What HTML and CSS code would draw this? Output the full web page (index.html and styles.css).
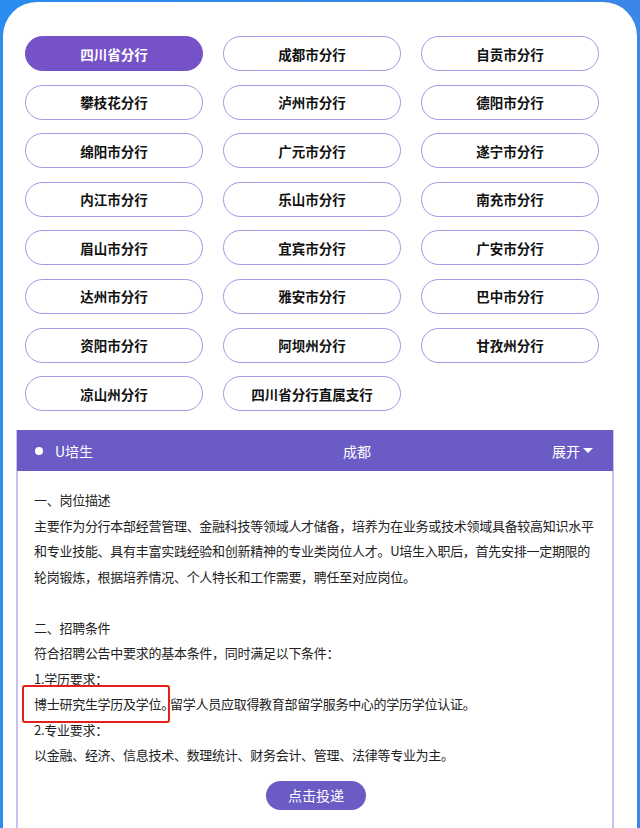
FILE: index.html
```html
<!DOCTYPE html>
<html>
<head>
    <meta charset="utf-8">
    <title>四川省分行</title>
    <link rel="stylesheet" href="styles.css">
</head>
<body>
<div class="card">
    <!-- Branch buttons -->
    <div class="branches">
        <div class="branch active">四川省分行</div>
        <div class="branch">成都市分行</div>
        <div class="branch">自贡市分行</div>
        <div class="branch">攀枝花分行</div>
        <div class="branch">泸州市分行</div>
        <div class="branch">德阳市分行</div>
        <div class="branch">绵阳市分行</div>
        <div class="branch">广元市分行</div>
        <div class="branch">遂宁市分行</div>
        <div class="branch">内江市分行</div>
        <div class="branch">乐山市分行</div>
        <div class="branch">南充市分行</div>
        <div class="branch">眉山市分行</div>
        <div class="branch">宜宾市分行</div>
        <div class="branch">广安市分行</div>
        <div class="branch">达州市分行</div>
        <div class="branch">雅安市分行</div>
        <div class="branch">巴中市分行</div>
        <div class="branch">资阳市分行</div>
        <div class="branch">阿坝州分行</div>
        <div class="branch">甘孜州分行</div>
        <div class="branch">凉山州分行</div>
        <div class="branch">四川省分行直属支行</div>
    </div>

    <!-- Job panel -->
    <div class="panel">
        <div class="panel-head">
            <span class="job"><span class="dot"></span>U培生</span>
            <span class="city">成都</span>
            <span class="toggle">展开<span class="caret"></span></span>
        </div>
        <div class="panel-body">
            <p>一、岗位描述</p>
            <p>主要作为分行本部经营管理、金融科技等领域人才储备，培养为在业务或技术领域具备较高知识水平和专业技能、具有丰富实践经验和创新精神的专业类岗位人才。U培生入职后，首先安排一定期限的轮岗锻炼，根据培养情况、个人特长和工作需要，聘任至对应岗位。</p>
            <p class="gap">二、招聘条件</p>
            <p>符合招聘公告中要求的基本条件，同时满足以下条件：</p>
            <p>1.学历要求：</p>
            <p><span class="mark">博士研究生学历及学位<span class="half">。</span></span> 留学人员应取得教育部留学服务中心的学历学位认证。</p>
            <p>2.专业要求：</p>
            <p>以金融、经济、信息技术、数理统计、财务会计、管理、法律等专业为主。</p>
            <div class="apply-row">
                <button class="apply">点击投递</button>
            </div>
        </div>
    </div>
</div>
</body>
</html>
```

FILE: styles.css
```css
body {
    margin: 0;
    background: linear-gradient(90deg, #2a8cef, #3b86e6);
    font-family: "Microsoft YaHei", "Noto Sans CJK SC", sans-serif;
    height: 828px;
    overflow: hidden;
}

.card {
    background: #fff;
    margin: 2px 3px 0;
    border-radius: 34px 34px 0 0;
    padding: 34px 0 0 0;
    min-height: 826px;
    box-sizing: border-box;
}

.branches {
    display: grid;
    grid-template-columns: repeat(3, 178px);
    column-gap: 20px;
    row-gap: 13.6px;
    padding-left: 22px;
}

.branch {
    height: 35px;
    box-sizing: border-box;
    border: 1.5px solid #ab95e4;
    border-radius: 18px;
    display: flex;
    align-items: center;
    justify-content: center;
    font-size: 13.5px;
    font-weight: bold;
    color: #111;
}

.branch.active {
    background: #7652c8;
    border-color: #7652c8;
    color: #fff;
}

.panel {
    margin: 19px 23px 0 13px;
    border: 2px solid #c9bff0;
    border-top: none;
    border-bottom: none;
}

.panel-head {
    height: 41px;
    background: #6b5cc5;
    color: #fff;
    font-size: 14px;
    display: flex;
    align-items: center;
    padding: 0 20px 0 18px;
    margin: 0 -1px;
}

.job {
    display: flex;
    align-items: center;
    width: 308px;
}

.dot {
    width: 8px;
    height: 8px;
    border-radius: 50%;
    background: #fff;
    margin-right: 12px;
}

.toggle {
    margin-left: auto;
    display: flex;
    align-items: center;
}

.caret {
    width: 0;
    height: 0;
    border-left: 5px solid transparent;
    border-right: 5px solid transparent;
    border-top: 5px solid #fff;
    margin-left: 3px;
}

.panel-body {
    padding: 16px 14px 20px 16px;
    font-size: 13px;
    letter-spacing: -0.28px;
    line-height: 25.5px;
    color: #222;
}

.panel-body p {
    margin: 0;
}

.panel-body .gap {
    margin-top: 25.5px;
}

.mark {
    border: 2px solid #e3201c;
    border-radius: 3px;
    padding: 7px 1px 8px 10px;
    margin: 0 -3px 0 -12px;
}

.half {
    font-feature-settings: "halt";
}

.apply-row {
    display: flex;
    justify-content: center;
    margin-top: 13px;
}

.apply {
    width: 100px;
    height: 29px;
    border: none;
    border-radius: 15px;
    background: #6b5cc5;
    color: #fff;
    font-size: 14px;
    letter-spacing: 0;
    font-family: inherit;
}
```
